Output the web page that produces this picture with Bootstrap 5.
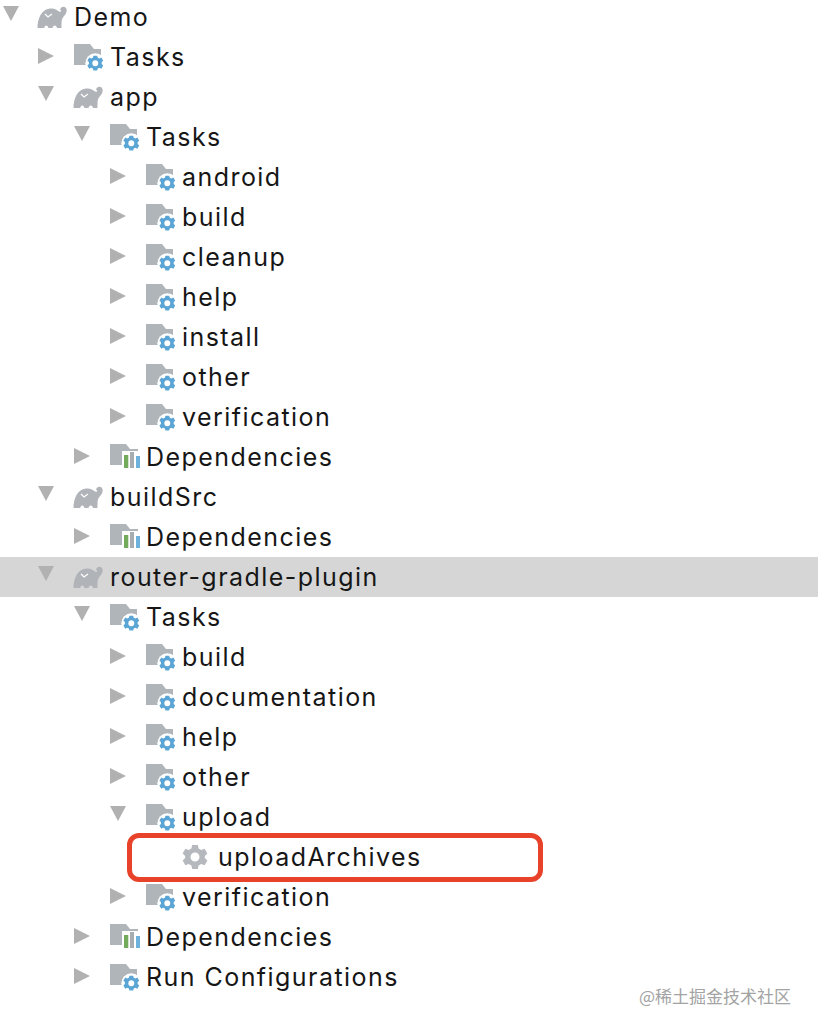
<!DOCTYPE html>
<html lang="en">
<head>
    <meta charset="UTF-8">
    <meta name="viewport" content="width=device-width, initial-scale=1.0">
    <title>Gradle tasks</title>
    <link href="https://cdn.jsdelivr.net/npm/bootstrap@5.3.3/dist/css/bootstrap.min.css" rel="stylesheet">
    <style>
        html, body { height: 100%; }
        body { background: #fff; overflow: hidden; position: relative; }
        symbol { overflow: visible; }
        .tree-list { margin-top: -3px; font-family: Inter, "Liberation Sans", sans-serif; font-size: 25px; letter-spacing: 1.45px; color: #161616; }
        .tree-row { height: 40px; padding-top: 2px; position: relative; white-space: nowrap; }
        .tree-row.selected { background: #d6d6d6; }
        .lv0 { padding-left: 3px; }
        .lv1 { padding-left: 38px; }
        .lv2 { padding-left: 74px; }
        .lv3 { padding-left: 110px; }
        .lv4 { padding-left: 146px; }
        .arrow-slot { width: 36px; flex: none; }
        .icon-slot { width: 36px; flex: none; }
        .lv0 .arrow-slot { width: 34px; }
        .lv0 .icon-slot { width: 37px; }
        .icon-slot svg { display: block; margin-top: -2px; overflow: visible; }
        .icon-slot svg.beast { margin-left: -1px; }
        .lv0 .icon-slot svg.beast { margin-left: 0; }
        .tree-arrow { display: block; width: 0; height: 0; }
        .tree-arrow.open { border-left: 8.5px solid transparent; border-right: 8.5px solid transparent; border-top: 15px solid #b1b1b1; margin-top: -9px; }
        .tree-arrow.shut { border-top: 8.5px solid transparent; border-bottom: 8.5px solid transparent; border-left: 16px solid #b1b1b1; margin-top: -5px; }
        .red-box { position: absolute; left: 127px; top: -4px; width: 416px; height: 49px; border: 5px solid #e8432a; border-radius: 12px; }
        .watermark { position: absolute; left: 639px; top: 984px; font-family: "Noto Sans CJK SC", sans-serif; font-size: 17px; line-height: 24px; color: #a3a3a3; white-space: nowrap; }
    </style>
</head>
<body>
    <svg width="0" height="0" class="position-absolute">
        <defs>
            <symbol id="elephant" viewBox="0 0 30 22">
                <path fill="#b0b4b9" d="M0.5 22C0.5 13 4 3.5 13 2.5 17 2 20 3.5 22 5.5 23 6.2 24.2 5.8 24.2 4.6L23 3.8C23.5 .8 27 -.3 28.8 1.8 30.5 4 29.5 7.5 27.5 9.5 26 11 24.8 13 24.6 15.5L24.4 22H20C19.6 18.6 16 18.6 15.4 22H11.4C11 18.6 7.6 18.6 7.2 22Z"/>
                <path fill="none" stroke="#fff" stroke-width="1.2" d="M8 8L11 11 15 8"/>
            </symbol>
            <symbol id="folder-gear" viewBox="0 0 32 26">
                <path fill="#b0b5ba" d="M0 0H16L20 5H27V21H0Z"/>
                <circle cx="21.3" cy="19.2" r="10" fill="#fff"/>
                <path transform="translate(21.3 19.2) scale(1.1) translate(-22 -19.2)" fill="#5aa5d5" fill-rule="evenodd" d="M20.3 12.5H23.7L24.2 14.3 25.8 15 27.5 14 29.2 16.9 27.8 18.2V20L29.2 21.3 27.5 24.2 25.8 23.3 24.2 24 23.7 25.8H20.3L19.8 24 18.2 23.3 16.5 24.2 14.8 21.3 16.2 20V18.2L14.8 16.9 16.5 14 18.2 15 19.8 14.3ZM22 16.5A2.7 2.7 0 1 0 22 21.9 2.7 2.7 0 1 0 22 16.5Z"/>
            </symbol>
            <symbol id="folder-bars" viewBox="0 0 32 26">
                <path fill="#b0b5ba" d="M0 0H16L20 5H28V7H12V21H0Z"/>
                <rect x="14" y="11" width="4.3" height="13" fill="#74ab5a"/>
                <rect x="20" y="8" width="4" height="16" fill="#a8adb2"/>
                <rect x="26" y="12" width="4" height="12" fill="#6db2dc"/>
            </symbol>
            <symbol id="task-gear" viewBox="0 0 26 26">
                <path fill="#b5b9bd" fill-rule="evenodd" d="M10.2 1H15.8L16.6 4.4 19.2 5.9 22.6 4.8 25.4 9.6 22.8 12V14L25.4 16.4 22.6 21.2 19.2 20.1 16.6 21.6 15.8 25H10.2L9.4 21.6 6.8 20.1 3.4 21.2 .6 16.4 3.2 14V12L.6 9.6 3.4 4.8 6.8 5.9 9.4 4.4ZM13 8.5A4.5 4.5 0 1 0 13 17.5 4.5 4.5 0 1 0 13 8.5Z"/>
            </symbol>
        </defs>
    </svg>

    <div class="tree-list">
        <div class="tree-row lv0 d-flex align-items-center"><span class="arrow-slot"><i class="tree-arrow open"></i></span><span class="icon-slot"><svg class="beast" width="30" height="22"><use href="#elephant"/></svg></span>Demo</div>
        <div class="tree-row lv1 d-flex align-items-center"><span class="arrow-slot"><i class="tree-arrow shut"></i></span><span class="icon-slot"><svg width="32" height="26"><use href="#folder-gear"/></svg></span>Tasks</div>
        <div class="tree-row lv1 d-flex align-items-center"><span class="arrow-slot"><i class="tree-arrow open"></i></span><span class="icon-slot"><svg class="beast" width="30" height="22"><use href="#elephant"/></svg></span>app</div>
        <div class="tree-row lv2 d-flex align-items-center"><span class="arrow-slot"><i class="tree-arrow open"></i></span><span class="icon-slot"><svg width="32" height="26"><use href="#folder-gear"/></svg></span>Tasks</div>
        <div class="tree-row lv3 d-flex align-items-center"><span class="arrow-slot"><i class="tree-arrow shut"></i></span><span class="icon-slot"><svg width="32" height="26"><use href="#folder-gear"/></svg></span>android</div>
        <div class="tree-row lv3 d-flex align-items-center"><span class="arrow-slot"><i class="tree-arrow shut"></i></span><span class="icon-slot"><svg width="32" height="26"><use href="#folder-gear"/></svg></span>build</div>
        <div class="tree-row lv3 d-flex align-items-center"><span class="arrow-slot"><i class="tree-arrow shut"></i></span><span class="icon-slot"><svg width="32" height="26"><use href="#folder-gear"/></svg></span>cleanup</div>
        <div class="tree-row lv3 d-flex align-items-center"><span class="arrow-slot"><i class="tree-arrow shut"></i></span><span class="icon-slot"><svg width="32" height="26"><use href="#folder-gear"/></svg></span>help</div>
        <div class="tree-row lv3 d-flex align-items-center"><span class="arrow-slot"><i class="tree-arrow shut"></i></span><span class="icon-slot"><svg width="32" height="26"><use href="#folder-gear"/></svg></span>install</div>
        <div class="tree-row lv3 d-flex align-items-center"><span class="arrow-slot"><i class="tree-arrow shut"></i></span><span class="icon-slot"><svg width="32" height="26"><use href="#folder-gear"/></svg></span>other</div>
        <div class="tree-row lv3 d-flex align-items-center"><span class="arrow-slot"><i class="tree-arrow shut"></i></span><span class="icon-slot"><svg width="32" height="26"><use href="#folder-gear"/></svg></span>verification</div>
        <div class="tree-row lv2 d-flex align-items-center"><span class="arrow-slot"><i class="tree-arrow shut"></i></span><span class="icon-slot"><svg width="32" height="26"><use href="#folder-bars"/></svg></span>Dependencies</div>
        <div class="tree-row lv1 d-flex align-items-center"><span class="arrow-slot"><i class="tree-arrow open"></i></span><span class="icon-slot"><svg class="beast" width="30" height="22"><use href="#elephant"/></svg></span>buildSrc</div>
        <div class="tree-row lv2 d-flex align-items-center"><span class="arrow-slot"><i class="tree-arrow shut"></i></span><span class="icon-slot"><svg width="32" height="26"><use href="#folder-bars"/></svg></span>Dependencies</div>
        <div class="tree-row selected lv1 d-flex align-items-center"><span class="arrow-slot"><i class="tree-arrow open"></i></span><span class="icon-slot"><svg class="beast" width="30" height="22"><use href="#elephant"/></svg></span>router-gradle-plugin</div>
        <div class="tree-row lv2 d-flex align-items-center"><span class="arrow-slot"><i class="tree-arrow open"></i></span><span class="icon-slot"><svg width="32" height="26"><use href="#folder-gear"/></svg></span>Tasks</div>
        <div class="tree-row lv3 d-flex align-items-center"><span class="arrow-slot"><i class="tree-arrow shut"></i></span><span class="icon-slot"><svg width="32" height="26"><use href="#folder-gear"/></svg></span>build</div>
        <div class="tree-row lv3 d-flex align-items-center"><span class="arrow-slot"><i class="tree-arrow shut"></i></span><span class="icon-slot"><svg width="32" height="26"><use href="#folder-gear"/></svg></span>documentation</div>
        <div class="tree-row lv3 d-flex align-items-center"><span class="arrow-slot"><i class="tree-arrow shut"></i></span><span class="icon-slot"><svg width="32" height="26"><use href="#folder-gear"/></svg></span>help</div>
        <div class="tree-row lv3 d-flex align-items-center"><span class="arrow-slot"><i class="tree-arrow shut"></i></span><span class="icon-slot"><svg width="32" height="26"><use href="#folder-gear"/></svg></span>other</div>
        <div class="tree-row lv3 d-flex align-items-center"><span class="arrow-slot"><i class="tree-arrow open"></i></span><span class="icon-slot"><svg width="32" height="26"><use href="#folder-gear"/></svg></span>upload</div>
        <div class="tree-row lv4 d-flex align-items-center"><span class="red-box"></span><span class="arrow-slot"></span><span class="icon-slot"><svg width="26" height="26"><use href="#task-gear"/></svg></span>uploadArchives</div>
        <div class="tree-row lv3 d-flex align-items-center"><span class="arrow-slot"><i class="tree-arrow shut"></i></span><span class="icon-slot"><svg width="32" height="26"><use href="#folder-gear"/></svg></span>verification</div>
        <div class="tree-row lv2 d-flex align-items-center"><span class="arrow-slot"><i class="tree-arrow shut"></i></span><span class="icon-slot"><svg width="32" height="26"><use href="#folder-bars"/></svg></span>Dependencies</div>
        <div class="tree-row lv2 d-flex align-items-center"><span class="arrow-slot"><i class="tree-arrow shut"></i></span><span class="icon-slot"><svg width="32" height="26"><use href="#folder-gear"/></svg></span>Run Configurations</div>
    </div>

    <div class="watermark">@稀土掘金技术社区</div>

    <script src="https://cdn.jsdelivr.net/npm/bootstrap@5.3.3/dist/js/bootstrap.bundle.min.js"></script>
</body>
</html>
